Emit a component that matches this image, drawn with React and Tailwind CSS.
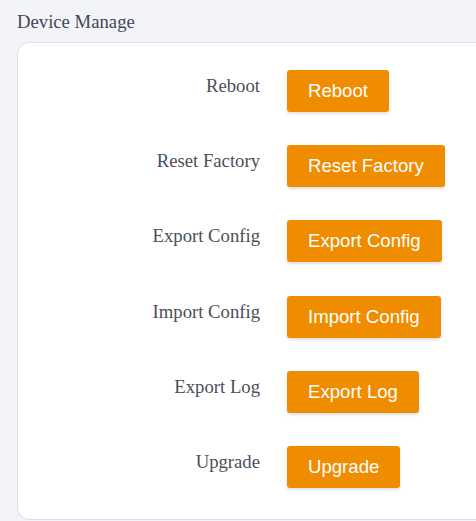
const ACTIONS = ['Reboot', 'Reset Factory', 'Export Config', 'Import Config', 'Export Log', 'Upgrade']

export default function App() {
  return (
    <div className="min-h-screen w-full overflow-hidden bg-[#f3f4f8] pl-[17px] pt-[11px]">
      <h2 className="font-['Liberation_Serif',serif] text-[18.7px] leading-[22px] text-[#3f4756]">Device Manage</h2>
      <div className="mt-[9px] w-[520px] rounded-[12px] border border-[#dedfe3] bg-white pt-[27px] pb-[31px]">
        <div className="flex flex-col gap-[33.2px]">
          {ACTIONS.map((a) => (
            <div key={a} className="flex items-start gap-[27px]">
              <div className="w-[242px] pt-[5px] text-right font-['Liberation_Serif',serif] text-[18.7px] leading-[22px] text-[#4a4f58]">
                {a}
              </div>
              <button className="h-[42px] rounded-[3px] bg-[#f08c00] px-[21px] font-['Liberation_Sans',Arial,sans-serif] text-[18.6px] text-white shadow-[0_2px_3px_rgba(0,0,0,0.12)]">
                {a}
              </button>
            </div>
          ))}
        </div>
      </div>
    </div>
  )
}
